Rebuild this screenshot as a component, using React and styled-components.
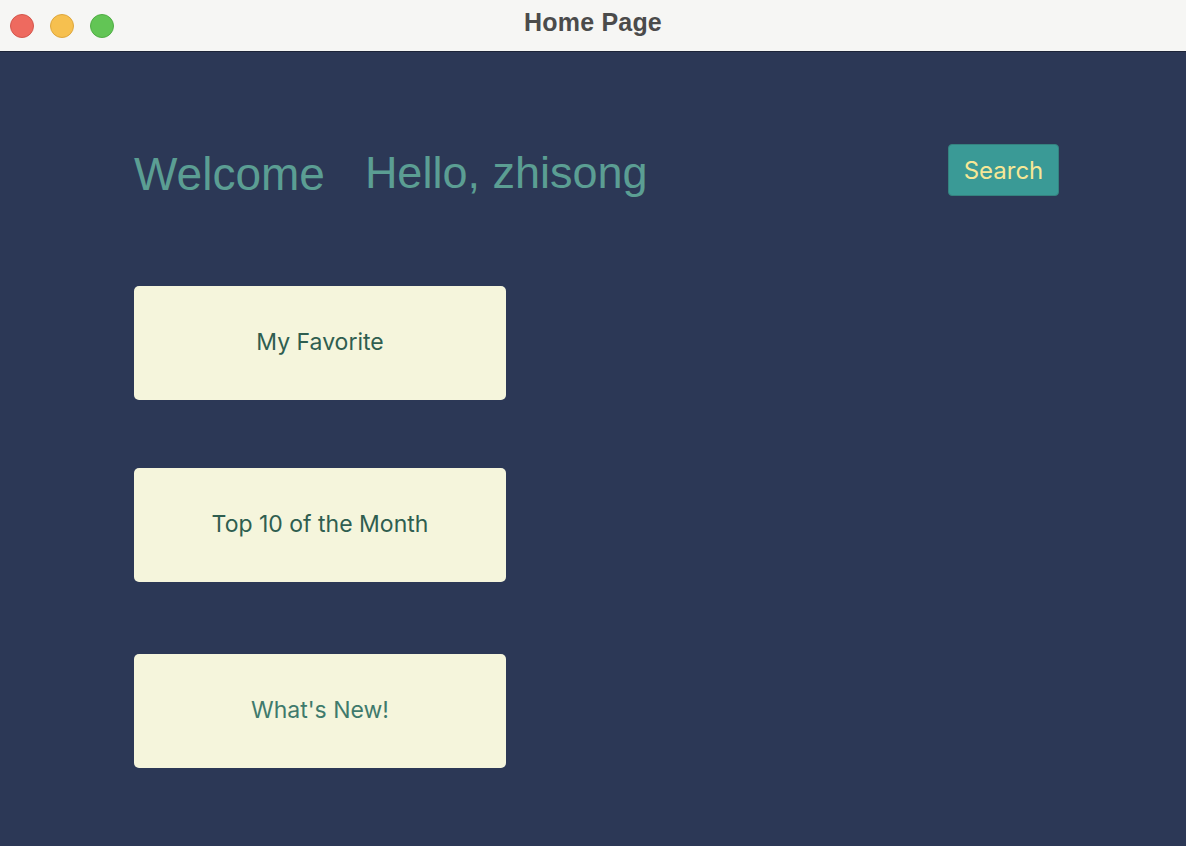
import React from "react";
import styled, { createGlobalStyle } from "styled-components";

const Global = createGlobalStyle`
  html, body { margin: 0; padding: 0; background: #2c3856; }
  body { font-family: "Liberation Sans", Arial, sans-serif; }
`;

const Window = styled.div`
  width: 1186px;
  height: 846px;
  display: flex;
  flex-direction: column;
  background: #2c3856;
  overflow: hidden;
`;

const TitleBar = styled.div`
  height: 51px;
  flex: 0 0 51px;
  background: #f6f6f4;
  border-bottom: 1px solid #1d2438;
  display: grid;
  grid-template-columns: 1fr auto 1fr;
  align-items: center;
`;

const Lights = styled.div`
  display: flex;
  gap: 16px;
  padding-left: 10px;
`;

const Light = styled.span`
  width: 24px;
  height: 24px;
  border-radius: 50%;
  box-sizing: border-box;
  background: ${(p) => p.$c};
  border: 1px solid ${(p) => p.$b};
`;

const Title = styled.div`
  font-family: "Liberation Sans", Arial, sans-serif;
  font-weight: 700;
  font-size: 25px;
  color: #4b4b4b;
  letter-spacing: 0.2px;
  margin-top: -6px;
`;

const Main = styled.main`
  flex: 1;
  padding: 92px 127px 0 134px;
  display: flex;
  flex-direction: column;
`;

const Header = styled.div`
  display: flex;
  align-items: center;
  height: 52px;
`;

const Heading = styled.h1`
  margin: 0 40px 0 0;
  font-family: "Liberation Sans", Arial, sans-serif;
  font-weight: 400;
  font-size: ${(p) => p.$size}px;
  color: #5b9e93;
  line-height: 1;
  position: relative;
  top: ${(p) => p.$dy}px;
`;

const Spacer = styled.div`
  flex: 1;
`;

const SearchButton = styled.button`
  width: 111px;
  height: 52px;
  background: #3a9a96;
  border: 1px solid #35827f;
  border-radius: 4px;
  color: #f6e796;
  font-family: "Inter", "Liberation Sans", sans-serif;
  font-size: 24px;
  padding: 0;
`;

const Cards = styled.div`
  display: flex;
  flex-direction: column;
`;

const Card = styled.div`
  width: 372px;
  height: 114px;
  margin-top: ${(p) => p.$space}px;
  background: #f5f5dc;
  border-radius: 5px;
  display: flex;
  align-items: center;
  justify-content: center;
  font-family: "Inter", "Liberation Sans", sans-serif;
  font-size: 23px;
  padding-bottom: 2px;
  box-sizing: border-box;
  color: ${(p) => p.$color};
`;

export default function App() {
  return (
    <>
      <Global />
      <Window>
        <TitleBar>
          <Lights>
            <Light $c="#ee6a5f" $b="#d4574d" />
            <Light $c="#f6c04f" $b="#dea73d" />
            <Light $c="#62c555" $b="#50ad45" />
          </Lights>
          <Title>Home Page</Title>
          <div />
        </TitleBar>
        <Main>
          <Header>
            <Heading $size={46} $dy={4}>Welcome</Heading>
            <Heading $size={45} $dy={2}>Hello, zhisong</Heading>
            <Spacer />
            <SearchButton>Search</SearchButton>
          </Header>
          <Cards>
            <Card $space={90} $color="#2f5e50">My Favorite</Card>
            <Card $space={68} $color="#2f5e50">Top 10 of the Month</Card>
            <Card $space={72} $color="#3f7a6c">What's New!</Card>
          </Cards>
        </Main>
      </Window>
    </>
  );
}
